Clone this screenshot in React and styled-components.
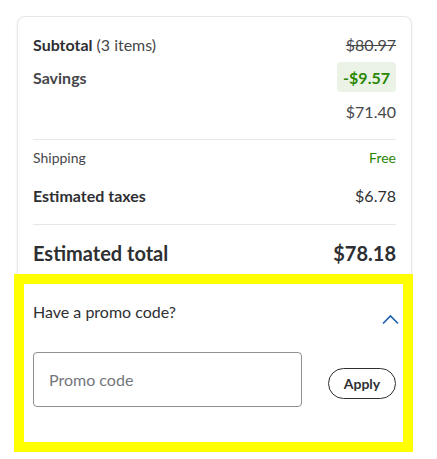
import React from "react";
import styled, { createGlobalStyle } from "styled-components";

const GlobalStyle = createGlobalStyle`
  body {
    margin: 0;
    background: #fff;
    font-family: Lato, "Noto Sans", sans-serif;
    color: #2e2f32;
  }
`;

const Page = styled.div`
  padding: 16px 0 0 17px;
`;

const Card = styled.div`
  width: 395px;
  box-sizing: border-box;
  border: 1px solid #e6e7e8;
  border-bottom: none;
  border-radius: 8px 8px 0 0;
  box-shadow: 0 1px 3px rgba(0, 0, 0, 0.08);
  padding: 15px 15px 0;
  display: flex;
  flex-direction: column;
`;

const Row = styled.div`
  display: flex;
  justify-content: space-between;
  align-items: center;
  height: ${(p) => p.h || 24}px;
  margin-top: ${(p) => p.mt || 0}px;
  font-size: ${(p) => p.size || 16}px;
`;

const Label = styled.span`
  font-weight: ${(p) => (p.bold ? 700 : 400)};
  color: ${(p) => (p.muted ? "#46474a" : "#2e2f32")};
`;

const Light = styled.span`
  font-weight: 400;
  color: #46474a;
`;

const Value = styled.span`
  font-weight: ${(p) => (p.bold ? 700 : 400)};
  color: ${(p) => p.color || "#2e2f32"};
  text-decoration: ${(p) => (p.struck ? "line-through" : "none")};
`;

const Badge = styled.span`
  background: #eaf3e6;
  color: #2a8703;
  font-weight: 700;
  border-radius: 4px;
  padding: 0 6px;
  height: 30px;
  display: flex;
  align-items: center;
`;

const Divider = styled.hr`
  border: none;
  border-top: 1px solid #e6e7e8;
  margin: ${(p) => p.m || "16px 0 0"};
`;

const Promo = styled.section`
  margin: 7px -17px 0 -19px;
  border: 10px solid #ffff00;
  padding: 16px 7px 35px 9px;
  background: #fff;
`;

const PromoHead = styled.div`
  display: flex;
  justify-content: space-between;
  align-items: flex-start;
  font-size: 16px;
  line-height: 24px;
`;

const Chevron = styled.svg`
  margin: 14px -3px 0 0;
`;

const PromoRow = styled.div`
  display: flex;
  justify-content: space-between;
  align-items: flex-start;
  margin-top: 27px;
`;

const Input = styled.input`
  width: 269px;
  height: 55px;
  box-sizing: border-box;
  border: 1px solid #909196;
  border-radius: 4px;
  padding: 0 15px;
  font-family: inherit;
  font-size: 16px;
  color: #2e2f32;
  &::placeholder {
    color: #74767c;
  }
`;

const ApplyButton = styled.button`
  margin-top: 16px;
  width: 68px;
  height: 31px;
  border: 1px solid #2e2f32;
  border-radius: 999px;
  background: #fff;
  font-family: inherit;
  font-weight: 700;
  font-size: 14px;
  color: #2e2f32;
`;

export default function App() {
  return (
    <Page>
      <GlobalStyle />
      <Card>
        <Row>
          <Label bold>
            Subtotal <Light>(3 items)</Light>
          </Label>
          <Value color="#46474a" struck>$80.97</Value>
        </Row>
        <Row h={30} mt={6}>
          <Label bold muted>Savings</Label>
          <Badge>-$9.57</Badge>
        </Row>
        <Row mt={7}>
          <span />
          <Value color="#46474a">$71.40</Value>
        </Row>
        <Divider />
        <Row size={14} h={20} mt={7}>
          <Label muted>Shipping</Label>
          <Value color="#2a8703">Free</Value>
        </Row>
        <Row mt={16}>
          <Label bold>Estimated taxes</Label>
          <Value>$6.78</Value>
        </Row>
        <Divider m="17px 0 0" />
        <Row size={20} h={28} mt={14}>
          <Label bold>Estimated total</Label>
          <Value bold>$78.18</Value>
        </Row>
        <Promo>
          <PromoHead>
            <span>Have a promo code?</span>
            <Chevron width="17" height="11" viewBox="0 0 17 11">
              <polyline points="1,9.5 8.5,2 16,9.5" fill="none" stroke="#1d5fb0" strokeWidth="1.6" />
            </Chevron>
          </PromoHead>
          <PromoRow>
            <Input placeholder="Promo code" />
            <ApplyButton>Apply</ApplyButton>
          </PromoRow>
        </Promo>
      </Card>
    </Page>
  );
}
